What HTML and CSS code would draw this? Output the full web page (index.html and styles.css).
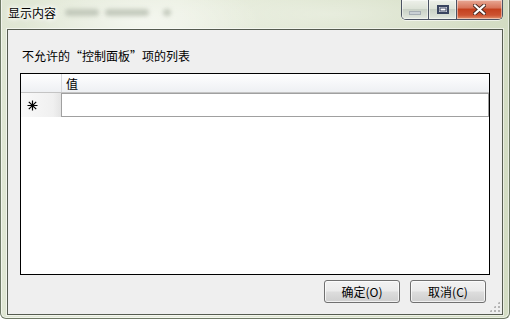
FILE: index.html
```html
<!DOCTYPE html>
<html lang="zh-CN">
  <head>
    <meta charset="UTF-8" />
    <title>显示内容</title>
    <link rel="stylesheet" href="styles.css">
  </head>
  <body>
    <div class="window">
      <div class="titlebar">
        <span class="title">显示内容</span>
        <span class="smudge s1"></span>
        <span class="smudge s2"></span>
        <span class="smudge s3"></span>
        <div class="cap-buttons">
          <span class="cap-btn min">
            <svg width="12" height="4" viewBox="0 0 12 4">
              <rect x="0.5" y="0.5" width="11" height="3" fill="#c9d0d4" stroke="#a5adb3" />
            </svg>
          </span>
          <span class="cap-btn max">
            <svg width="12" height="9" viewBox="0 0 12 9">
              <rect x="1" y="1" width="10" height="7" fill="#f4f6fa" stroke="#3a4560" stroke-width="2" />
              <rect x="3" y="3" width="6" height="3" fill="#ffffff" stroke="#3a4560" stroke-width="1" />
            </svg>
          </span>
          <span class="cap-btn close">
            <svg width="13" height="11" viewBox="0 0 13 11">
              <path d="M2 1.5 L11 9.5 M11 1.5 L2 9.5" stroke="#4a2a22" stroke-width="4" stroke-linecap="square" />
              <path d="M2 1.5 L11 9.5 M11 1.5 L2 9.5" stroke="#ffffff" stroke-width="2.2" stroke-linecap="square" />
            </svg>
          </span>
        </div>
      </div>

      <div class="client">
        <div class="prompt">不允许的“控制面板”项的列表</div>

        <div class="grid">
          <div class="grid-head">
            <div class="corner"></div>
            <div class="col-head">值</div>
          </div>
          <div class="grid-row">
            <div class="row-head">
              <svg width="11" height="11" viewBox="0 0 11 11">
                <path d="M5.5 0.5 V10.5 M0.5 5.5 H10.5 M1.8 1.8 L9.2 9.2 M9.2 1.8 L1.8 9.2" stroke="#000" stroke-width="1.2" />
              </svg>
            </div>
            <div class="cell"></div>
          </div>
        </div>

        <div class="actions">
          <button class="btn">确定(O)</button>
          <button class="btn">取消(C)</button>
        </div>

        <span class="grip"></span>
      </div>
    </div>
  </body>
</html>
```

FILE: styles.css
```css
html,
body {
  margin: 0;
  width: 510px;
  height: 319px;
  overflow: hidden;
}

body {
  font-family: "Noto Sans CJK SC", "Liberation Sans", sans-serif;
  font-size: 12px;
  color: #000;
}

.window {
  box-sizing: border-box;
  width: 510px;
  height: 319px;
  display: flex;
  flex-direction: column;
  border: 1px solid #6f7a66;
  border-top: none;
  border-radius: 0 0 6px 6px;
  background:
    radial-gradient(ellipse 120px 40px at 140px 20px, rgba(255, 255, 255, 0.55), transparent),
    radial-gradient(ellipse 160px 30px at 330px 14px, rgba(255, 255, 255, 0.35), transparent),
    linear-gradient(to right, #dfe6d3, #e9eedf 35%, #dbe3cc 65%, #d3dcc3);
  box-shadow: inset 1px 0 0 rgba(255, 255, 255, 0.6), inset -1px -1px 0 rgba(255, 255, 255, 0.5);
}

/* title bar */

.titlebar {
  position: relative;
  height: 29px;
  display: flex;
  align-items: flex-start;
  flex-shrink: 0;
}

.title {
  margin: 5px 0 0 7px;
  line-height: 16px;
  font-size: 12px;
  color: #000;
  text-shadow: 0 0 4px #fff, 0 0 6px #fff, 0 0 8px rgba(255, 255, 255, 0.8);
}

.smudge {
  position: absolute;
  top: 9px;
  height: 7px;
  border-radius: 4px;
  background: #b9c0b2;
  filter: blur(2px);
  opacity: 0.8;
}

.s1 {
  left: 64px;
  width: 34px;
}

.s2 {
  left: 104px;
  width: 44px;
}

.s3 {
  left: 162px;
  width: 8px;
}

.cap-buttons {
  display: flex;
  margin-left: auto;
  margin-right: 6px;
  height: 19px;
  border: 1px solid #4b5363;
  border-top: none;
  border-radius: 0 0 5px 5px;
  overflow: hidden;
  box-shadow: 0 1px 0 rgba(255, 255, 255, 0.6);
}

.cap-btn {
  display: flex;
  align-items: center;
  justify-content: center;
  height: 19px;
  box-shadow: inset 0 0 0 1px rgba(255, 255, 255, 0.45);
}

.min,
.max {
  background: linear-gradient(#eef1ea, #dde3d8 45%, #c9d1c6 50%, #dae0d6 85%, #e6ebe2);
  border-right: 1px solid #4b5363;
}

.min {
  width: 26px;
  align-items: flex-end;
}

.min svg {
  margin-bottom: 4px;
}

.max {
  width: 27px;
}

.close {
  width: 45px;
  background: linear-gradient(#e8a996, #d8765c 40%, #c4411f 50%, #cc5332 80%, #e3936e);
}

/* client area */

.client {
  position: relative;
  flex: 1;
  display: flex;
  flex-direction: column;
  margin: 0 6px 3px 6px;
  padding: 18px 0 10px;
  background: #efefef;
  border: 1px solid #555b50;
  box-shadow: 0 0 0 1px rgba(255, 255, 255, 0.55);
}

.prompt {
  margin-left: 14px;
  line-height: 16px;
  height: 16px;
}

.grid {
  box-sizing: border-box;
  margin: 9px 0 0 12px;
  width: 470px;
  height: 202px;
  border: 1px solid #000;
  background: #fff;
}

.grid-head {
  display: flex;
  height: 18px;
  border-bottom: 1px solid #c4c4c4;
  background: linear-gradient(#ffffff, #f6f7f9 50%, #eef0f3);
}

.corner {
  box-sizing: border-box;
  width: 41px;
  border-right: 1px solid #d6d8dc;
}

.col-head {
  padding: 1px 0 0 4px;
  line-height: 17px;
}

.grid-row {
  display: flex;
  height: 24px;
}

.row-head {
  width: 40px;
  display: flex;
  align-items: center;
  padding-left: 6px;
  box-sizing: border-box;
  background: linear-gradient(to right, #f9f9f9, #f0f0f0 80%, #e4e4e4);
}

.cell {
  flex: 1;
  box-sizing: border-box;
  border: 1px solid #a0a0a0;
  background: #fff;
}

.actions {
  display: flex;
  justify-content: flex-end;
  gap: 10px;
  margin-top: 5px;
  padding-right: 16px;
}

.btn {
  box-sizing: border-box;
  width: 76px;
  height: 23px;
  padding: 0;
  font-family: "Noto Sans CJK SC", "Liberation Sans", sans-serif;
  font-size: 12px;
  color: #000;
  border: 1px solid #707070;
  border-radius: 3px;
  background: linear-gradient(#f2f2f2, #ebebeb 48%, #dddddd 52%, #cfcfcf);
  box-shadow: inset 0 0 0 1px rgba(255, 255, 255, 0.7);
}

.grip {
  position: absolute;
  right: 2px;
  bottom: 2px;
  width: 11px;
  height: 11px;
  background:
    radial-gradient(circle, #b5b5b5 0.9px, transparent 1.1px) 0 0 / 4px 4px;
  clip-path: polygon(100% 0, 100% 100%, 0 100%);
}
```
